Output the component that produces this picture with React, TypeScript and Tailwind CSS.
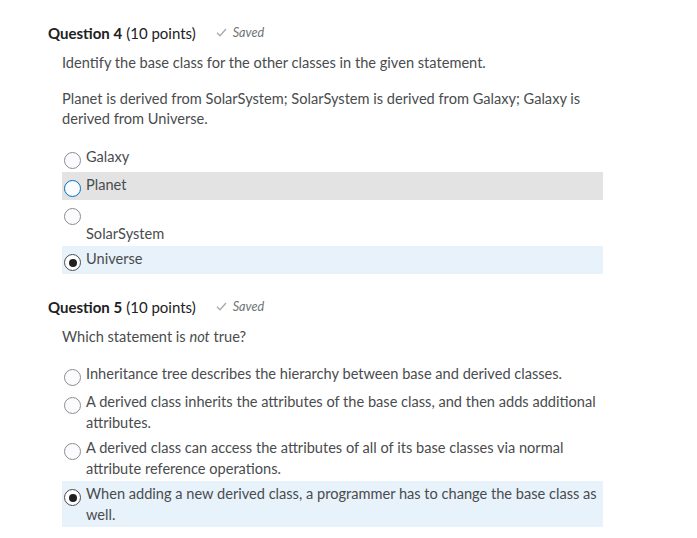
import { ReactNode } from "react";

type Option = {
  text: ReactNode;
  state?: "hover" | "selected";
  wrapRadio?: boolean;
};

function Radio({ state }: { state?: "hover" | "selected" }) {
  if (state === "selected") {
    return (
      <span className="mt-[6px] flex h-[17px] w-[17px] shrink-0 items-center justify-center rounded-full border-[1.5px] border-[#494c4e] bg-white">
        <span className="h-[8px] w-[8px] rounded-full bg-[#202122]" />
      </span>
    );
  }
  if (state === "hover") {
    return (
      <span className="mt-[6px] h-[17px] w-[17px] shrink-0 rounded-full border-[1.5px] border-[#006fbf] bg-[#f9fbff]" />
    );
  }
  return (
    <span className="mt-[6px] h-[17px] w-[17px] shrink-0 rounded-full border border-[#8a8d90] bg-[#fbfbfd]" />
  );
}

function OptionRow({ option }: { option: Option }) {
  const bg =
    option.state === "hover"
      ? "bg-[#e3e3e3]"
      : option.state === "selected"
        ? "bg-[#e8f2fb]"
        : "";
  if (option.wrapRadio) {
    return (
      <div className={`w-[541px] py-[2px] pl-[2px] ${bg}`}>
        <div className="flex h-[21px]">
          <Radio state={option.state} />
        </div>
        <div className="pl-[22px] leading-[21px]">{option.text}</div>
      </div>
    );
  }
  return (
    <div className={`flex min-h-[28px] w-[541px] items-start gap-[5px] py-[2px] pl-[2px] ${bg}`}>
      <Radio state={option.state} />
      <div className="pr-[6px] leading-[21px]">{option.text}</div>
    </div>
  );
}

function Saved() {
  return (
    <span className="ml-[20px] inline-flex items-center gap-[6px] text-[12.6px] italic text-[#6e7376]">
      <svg width="11" height="9" viewBox="0 0 11 9" fill="none">
        <path d="M1 4.8 L4 7.8 L10 1" stroke="#a9abad" strokeWidth="1.4" />
      </svg>
      Saved
    </span>
  );
}

function Heading({ n }: { n: number }) {
  return (
    <div className="flex h-[24px] items-center text-[15px] text-[#202122]">
      <span className="font-bold">Question {n}</span>
      <span className="ml-[4px]">(10 points)</span>
      <Saved />
    </div>
  );
}

const q4: Option[] = [
  { text: "Galaxy" },
  { text: "Planet", state: "hover" },
  { text: "SolarSystem", wrapRadio: true },
  { text: "Universe", state: "selected" },
];

const q5: Option[] = [
  { text: "Inheritance tree describes the hierarchy between base and derived classes." },
  {
    text: "A derived class inherits the attributes of the base class, and then adds additional attributes.",
  },
  {
    text: "A derived class can access the attributes of all of its base classes via normal attribute reference operations.",
  },
  {
    text: "When adding a new derived class, a programmer has to change the base class as well.",
    state: "selected",
  },
];

export default function App() {
  return (
    <div
      className="min-h-[538px] w-[697px] bg-white pl-[48px] pt-[21px] text-[14.6px] text-[#494c4e]"
      style={{ fontFamily: "Lato, 'Liberation Sans', sans-serif" }}
    >
      <Heading n={4} />
      <div className="pl-[14px]">
        <p className="mt-[8px] leading-[20px]">
          Identify the base class for the other classes in the given statement.
        </p>
        <p className="mt-[16px] w-[541px] leading-[20px]">
          Planet is derived from SolarSystem; SolarSystem is derived from Galaxy; Galaxy is derived
          from Universe.
        </p>
        <div className="mt-[15px]">
          {q4.map((o, i) => (
            <OptionRow key={i} option={o} />
          ))}
        </div>
      </div>

      <div className="mt-[21px]">
        <Heading n={5} />
      </div>
      <div className="pl-[14px]">
        <p className="mt-[8px] leading-[20px]">
          Which statement is <em>not</em> true?
        </p>
        <div className="mt-[14px]">
          {q5.map((o, i) => (
            <OptionRow key={i} option={o} />
          ))}
        </div>
      </div>
    </div>
  );
}
